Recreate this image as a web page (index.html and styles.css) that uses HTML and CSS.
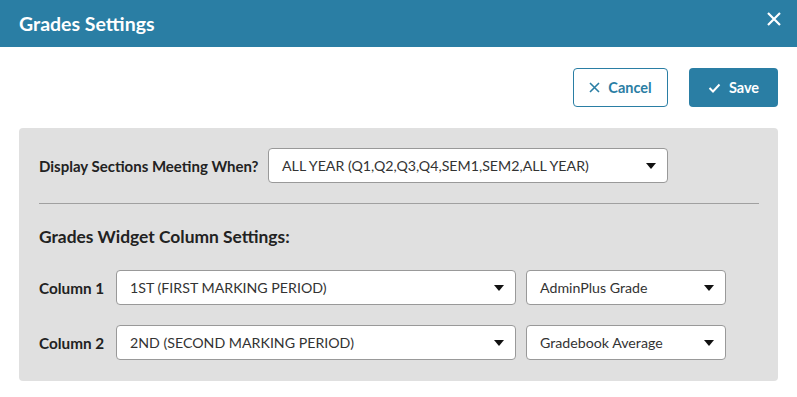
FILE: index.html
```html
<!DOCTYPE html>
<html lang="en">
<head>
    <meta charset="UTF-8">
    <title>Grades Settings</title>
    <link rel="stylesheet" href="styles.css">
</head>
<body>
    <header class="modal-header">
        <h1>Grades Settings</h1>
        <button class="close-btn" aria-label="Close">
            <svg width="14" height="14" viewBox="0 0 14 14"><path d="M1 1L13 13M13 1L1 13" stroke="#fff" stroke-width="2.2"/></svg>
        </button>
    </header>

    <div class="toolbar">
        <button class="btn btn-outline">
            <svg width="11" height="11" viewBox="0 0 11 11"><path d="M1 1L10 10M10 1L1 10" stroke="#2a7ea4" stroke-width="1.6"/></svg>
            Cancel
        </button>
        <button class="btn btn-primary">
            <svg width="13" height="10" viewBox="0 0 13 10"><path d="M1.5 5L5 8.5L11.5 1.5" fill="none" stroke="#fff" stroke-width="2"/></svg>
            Save
        </button>
    </div>

    <section class="panel">
        <div class="field-row">
            <label class="field-label">Display Sections Meeting When?</label>
            <div class="select select-wide">
                <span>ALL YEAR (Q1,Q2,Q3,Q4,SEM1,SEM2,ALL YEAR)</span>
                <i class="caret"></i>
            </div>
        </div>

        <hr class="divider">

        <h2>Grades Widget Column Settings:</h2>

        <div class="column-row">
            <label class="column-label">Column 1</label>
            <div class="select select-wide">
                <span>1ST (FIRST MARKING PERIOD)</span>
                <i class="caret"></i>
            </div>
            <div class="select select-small">
                <span>AdminPlus Grade</span>
                <i class="caret"></i>
            </div>
        </div>

        <div class="column-row">
            <label class="column-label">Column 2</label>
            <div class="select select-wide">
                <span>2ND (SECOND MARKING PERIOD)</span>
                <i class="caret"></i>
            </div>
            <div class="select select-small">
                <span>Gradebook Average</span>
                <i class="caret"></i>
            </div>
        </div>
    </section>
</body>
</html>
```

FILE: styles.css
```css
* {
    margin: 0;
    padding: 0;
    box-sizing: border-box;
    font-family: 'Lato', 'Open Sans', sans-serif;
}

body {
    background: #fff;
    color: #222;
    width: 797px;
}

.modal-header {
    display: flex;
    justify-content: space-between;
    align-items: center;
    height: 47px;
    padding: 0 16px 0 19px;
    background: #2a7ea4;
}

.modal-header h1 {
    color: #fff;
    font-size: 19.5px;
    font-weight: 700;
}

.close-btn {
    display: flex;
    background: none;
    border: none;
    margin-top: -10px;
}

.toolbar {
    display: flex;
    justify-content: flex-end;
    gap: 21px;
    padding: 21px 19px 21px 0;
}

.btn {
    display: flex;
    align-items: center;
    justify-content: center;
    gap: 8px;
    height: 39px;
    border-radius: 4px;
    font-size: 14.5px;
    font-weight: 700;
}

.btn-outline {
    width: 95px;
    background: #fff;
    color: #2a7ea4;
    border: 1px solid #2a7ea4;
}

.btn-primary {
    width: 89px;
    background: #2a7ea4;
    color: #fff;
    border: none;
}

.panel {
    margin: 0 19px;
    padding: 20px 19px 21px 20px;
    background: #e0e0e0;
    border-radius: 4px;
}

.field-row,
.column-row {
    display: flex;
    align-items: center;
}

.field-label {
    width: 229px;
    font-size: 15px;
    font-weight: 700;
}

.divider {
    border: none;
    border-top: 1px solid #a0a0a0;
    margin: 20px 0 22px;
}

.panel h2 {
    font-size: 17.4px;
    font-weight: 700;
    margin-bottom: 23px;
}

.column-row {
    gap: 10px;
    margin-bottom: 20px;
}

.column-row:last-child {
    margin-bottom: 0;
}

.column-label {
    width: 67px;
    font-size: 15.3px;
    font-weight: 700;
}

.select {
    display: flex;
    align-items: center;
    justify-content: space-between;
    height: 35px;
    padding: 0 11px 0 13px;
    background: #fff;
    border: 1px solid #999;
    border-radius: 4px;
    font-size: 14.2px;
    color: #333;
}

.select-wide {
    width: 400px;
}

.select-small {
    width: 200px;
}

.caret {
    width: 0;
    height: 0;
    border-left: 5px solid transparent;
    border-right: 5px solid transparent;
    border-top: 6px solid #111;
}
```
